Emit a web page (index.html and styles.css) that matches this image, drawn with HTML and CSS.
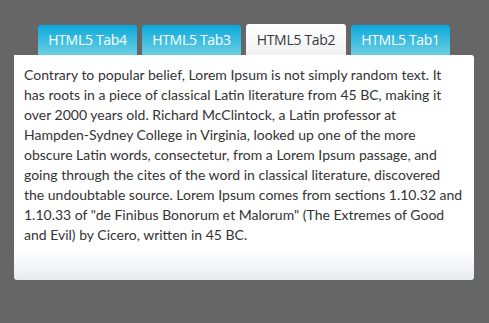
FILE: index.html
```html
<!DOCTYPE html>
<html>
<head>
<meta charset="utf-8">
<link rel="stylesheet" href="styles.css">
</head>
<body>
<div class="wrap">
  <div class="tabs">
    <div class="tab">HTML5 Tab4</div>
    <div class="tab">HTML5 Tab3</div>
    <div class="tab active">HTML5 Tab2</div>
    <div class="tab">HTML5 Tab1</div>
  </div>
  <div class="panel">
    <p>Contrary to popular belief, Lorem Ipsum is not simply random text. It has roots in a piece of classical Latin literature from 45 BC, making it over 2000 years old. Richard McClintock, a Latin professor at Hampden-Sydney College in Virginia, looked up one of the more obscure Latin words, consectetur, from a Lorem Ipsum passage, and going through the cites of the word in classical literature, discovered the undoubtable source. Lorem Ipsum comes from sections 1.10.32 and 1.10.33 of "de Finibus Bonorum et Malorum" (The Extremes of Good and Evil) by Cicero, written in 45 BC.</p>
  </div>
</div>
</body>
</html>
```
FILE: styles.css
```css
html, body {
  margin: 0;
  padding: 0;
  background: #666666;
  height: 100%;
}
.wrap {
  padding: 25px 15px 0 14px;
  width: 460px;
}
.tabs {
  display: flex;
  justify-content: center;
  gap: 5px;
  height: 30px;
}
.tab {
  width: 99px;
  height: 30px;
  box-sizing: border-box;
  border-radius: 3px 3px 0 0;
  background: linear-gradient(to bottom, #0ba8dc 0%, #3bbce0 50%, #6ccfe0 100%);
  color: #ffffff;
  font-family: "Open Sans", sans-serif;
  font-size: 14px;
  line-height: 30px;
  text-align: center;
  letter-spacing: -0.3px;
}
.tab.active {
  height: 31px;
  margin-top: -1px;
  line-height: 31px;
  width: 100px;
  background: linear-gradient(to bottom, #ffffff 0%, #f6f6f6 60%, #f0f0f0 100%);
  color: #333a44;
}
.panel {
  background: linear-gradient(to bottom, #ffffff 0%, #ffffff 87%, #e8ebee 100%);
  border-radius: 0 3px 3px 3px;
  height: 225px;
  box-sizing: border-box;
  padding: 10px 11px 0 10px;
}
.panel p {
  margin: 0;
  font-family: Lato, sans-serif;
  font-size: 14px;
  line-height: 20px;
  color: #333333;
}
```
